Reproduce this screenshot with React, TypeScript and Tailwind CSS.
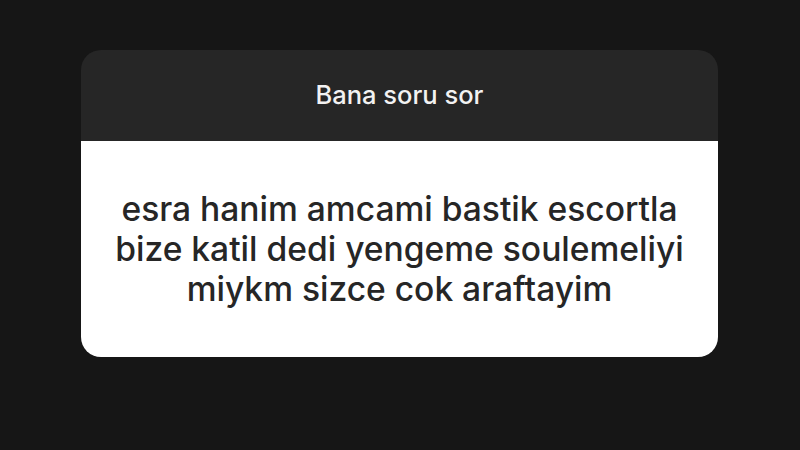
export default function App() {
  return (
    <div className="w-[800px] h-[450px] bg-[#161616] pt-[50px] pl-[81px]" style={{ fontFamily: 'Inter, "Liberation Sans", sans-serif' }}>
      <div className="w-[637px] rounded-[20px] overflow-hidden">
        <div className="h-[91px] bg-[#262626] flex items-center justify-center">
          <span className="text-[25.5px] text-[#f2f2f2] font-medium">Bana soru sor</span>
        </div>
        <div className="h-[216px] bg-white flex items-center justify-center">
          <p className="text-[33.6px] leading-[40px] text-[#262626] text-center font-medium">
            esra hanim amcami bastik escortla
            <br />
            bize katil dedi yengeme soulemeliyi
            <br />
            miykm sizce cok araftayim
          </p>
        </div>
      </div>
    </div>
  );
}
